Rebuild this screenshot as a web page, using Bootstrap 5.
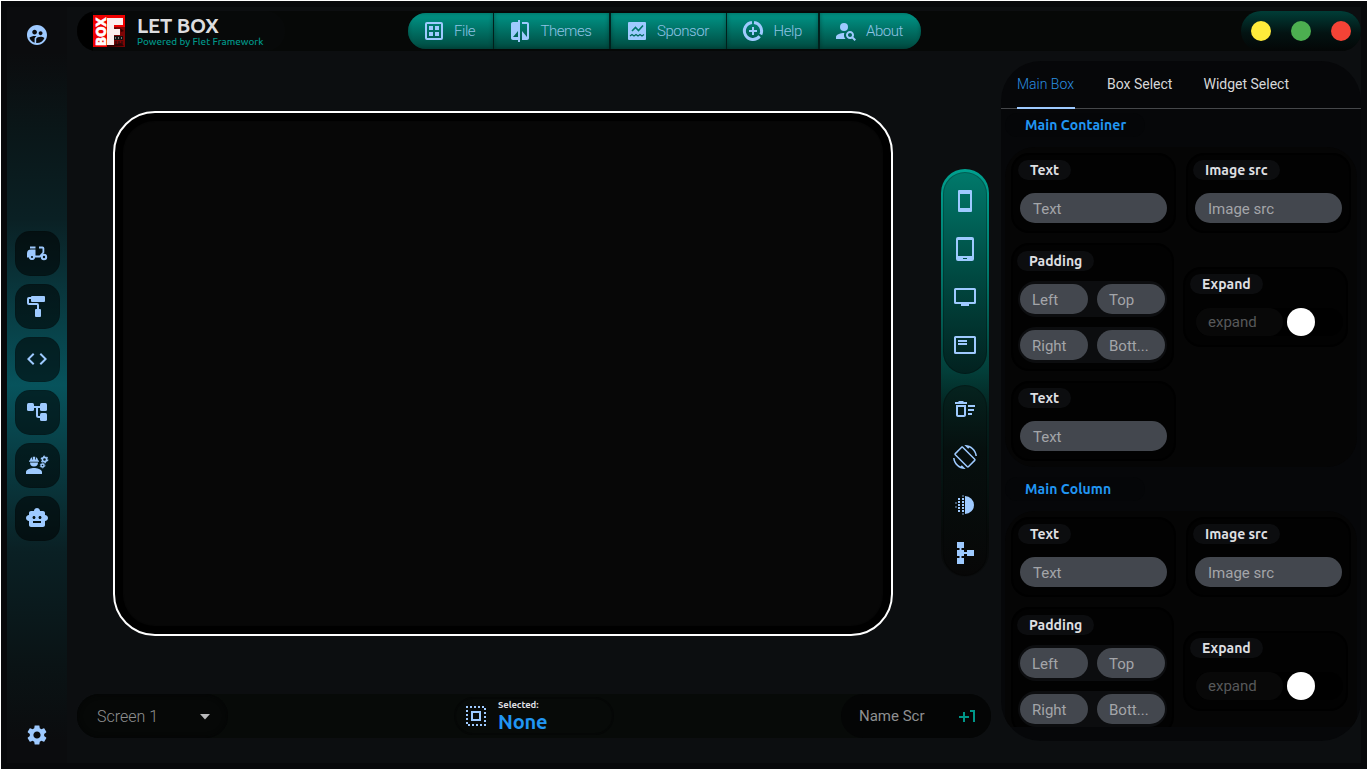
<!DOCTYPE html>
<html lang="en" data-bs-theme="dark">
<head>
<meta charset="utf-8">
<meta name="viewport" content="width=device-width, initial-scale=1">
<title>LET BOX</title>
<link href="https://cdn.jsdelivr.net/npm/bootstrap@5.3.0/dist/css/bootstrap.min.css" rel="stylesheet">
<style>
:root{--ice:#9ecaff;--teal:#009688;--blue:#2196f3}
html,body{height:100%}
body{background:#fff;font-family:Roboto,"Liberation Sans",sans-serif;font-size:14px;overflow:hidden;padding:1px}
svg{display:block;fill:var(--ice);flex:none}
.ln{fill:none;stroke:var(--ice);stroke-width:2}
.shell{background:#08090b;padding:6px;height:768px;width:1366px}
.inner{background:#0c0e10}
.ubuntu{font-family:Ubuntu,"Noto Sans",sans-serif}
.side{width:60px;background:linear-gradient(#0b0c0e 0,#0b0c0e 6%,#0a1618 16%,#0a2024 28%,#07535c 50%,#0a2024 72%,#0a1315 87%,#0b0c0e 97%);padding:16px 0}
.side-btn{width:45px;height:45px;border-radius:15px;background:rgba(0,0,0,.55);border:1px solid rgba(0,0,0,.12)}
.stage{padding:4px 0 0 10px}
.topbar{height:40px;background:#060807;border-radius:20px}
.brand{width:208px;padding-left:16px;gap:12px;background:linear-gradient(90deg,#000 0,#000 16px,#070909 16px);border-radius:20px}
.brand-title{font-size:20.500px;font-weight:600;color:#dddddf;line-height:18px;letter-spacing:-.25px;margin-top:3px}
.brand-sub{font-size:9.900px;color:var(--teal);line-height:14px;font-weight:500;white-space:nowrap}
.menu{height:36px;border-radius:18px;gap:1.5px;overflow:hidden;background:#01211d}
.menu-item{height:36px;background:linear-gradient(#009688,#00493f);box-shadow:inset 0 0 4px rgba(0,30,25,.45);color:#8fc3e6;font-size:15px;font-weight:300;gap:8.500px;padding-left:14px;letter-spacing:-.45px}
.lights{width:120px;background:linear-gradient(#003d37,#031312 55%,#040606);border-radius:20px;gap:20px}
.dot{width:20px;height:20px}
.device{width:780px;height:525px;border:2px solid #fff;border-radius:42px;background:#070707;box-shadow:inset 0 0 1px 8px #000}
.tools{width:48px;height:408px;border-radius:24px;padding-top:3px}
.tools-top{background:linear-gradient(#00a08f,#00796c 25%,#033d38 50%,#04201d 60%,#060908 90%,#0a0c0d)}
.tool-set{width:44px;border-radius:22px;box-shadow:inset 0 0 0 1px rgba(0,0,0,.22)}
.set-a{height:202px;background:linear-gradient(#00796b,#004a42 50%,#02211f)}
.set-b{height:191px;background:linear-gradient(#05231f,#060f0e 35%,#070707)}
.tool-set>span{height:48px;flex:none}
.foot{height:44px;background:#070a08;border-radius:22px}
.pick{width:151px;border-radius:22px;background:#060807;color:#8f9091;font-size:16px;font-weight:300;padding:2px 17px 0 20px;box-shadow:inset 0 0 5px #040505}
.sel{width:160px;height:38px;border:2px solid #050706;border-radius:19px;padding-left:10px;gap:12px}
.name-box{width:150px;border-radius:22px;background:#040505;color:#8f9091;font-size:15px;padding:0 15px 0 18px}
.panel{width:360px;height:680px;border-radius:40px;background:#060709;overflow:hidden}
.panel .nav-tabs{height:48px;border-bottom:1px solid #45474a;flex-wrap:nowrap}
.panel .nav-link{border:0;border-radius:0;padding:0;margin:0 16px;height:48px;line-height:46px;color:#d6d7d9;background:none;font-size:14px;white-space:nowrap}
.panel .nav-link:last-child{margin-left:15px}
.panel .nav-link.active{width:58px;color:#2a8fe0;background:none;border-bottom:2px solid var(--ice);font-weight:300}
.scroller{height:618px;overflow:hidden;padding:4px}
.head{height:24px;width:140px;border-radius:12px;background:#050608;color:var(--blue);font-size:14px;font-weight:600;line-height:24px;padding-left:20px;margin-bottom:10px;letter-spacing:.08px}
.group{height:320px;border-radius:30px;background:#050505;padding:6px;margin-bottom:10px;gap:10px}
.tile{width:165px;height:80px;border-radius:18px;background:#020202;border:2px solid #000;padding:5px 7px 0 5px}
.tag{height:20px;border-radius:10px;background:#0c0d0f;color:#dedfe1;font-size:14px;font-weight:600;line-height:20px;padding:0 12px;width:max-content;margin-bottom:13px;white-space:nowrap}
.field{height:30px;width:147px;border-radius:15px;background:#43474e;color:#a3a5a9;font-size:15px;line-height:32px;padding-left:13px;margin-left:2px}
.tile.tall{width:163px;height:128px;padding:6px 4px}
.tile.low{margin-left:-1px}
.tall .tag{margin-bottom:10px}
.pair{height:36px;width:149px;border-radius:18px;background:#0c0d0f;padding:3px 2px 3px 2px;gap:9px;margin:0 0 10px 1px}
.pair .field{width:68px;margin:0;padding-left:12px}
.tog{height:28px;width:147px;background:#000;border-radius:14px;margin:14px 0 0 6px;gap:4px}
.tog .off{width:87px;height:28px;border-radius:14px;background:#080808;color:#57585a;font-size:15px;line-height:28px;padding-left:12px}
.knob{width:28px;height:28px}
</style>
</head>
<body>
<div class="shell">
<div class="inner d-flex h-100">
  <aside class="side d-flex flex-column align-items-center justify-content-between">
    <svg width="24" height="24" viewBox="0 0 24 24"><path d="M11.99 2c-5.52 0-10 4.48-10 10s4.48 10 10 10 10-4.48 10-10-4.48-10-10-10zm3.61 6.34c1.07 0 1.93.86 1.93 1.93 0 1.07-.86 1.93-1.93 1.93-1.07 0-1.93-.86-1.93-1.93-.01-1.07.86-1.93 1.93-1.93zm-6-1.58c1.3 0 2.36 1.06 2.36 2.36 0 1.3-1.06 2.36-2.36 2.36s-2.36-1.06-2.36-2.36c0-1.31 1.05-2.36 2.36-2.36zm0 9.13v3.75c-2.4-.75-4.3-2.6-5.14-4.96 1.05-1.12 3.67-1.69 5.14-1.69.53 0 1.2.08 1.9.22-1.64.87-1.9 2.02-1.9 2.68zM11.99 20c-.27 0-.53-.01-.79-.04v-4.07c0-1.42 2.94-2.13 4.4-2.13 1.07 0 2.92.39 3.84 1.15-1.17 2.97-4.06 5.09-7.45 5.09z"/></svg>
    <div class="d-flex flex-column gap-2 pt-px" style="padding-top:1px">
      <div class="side-btn d-flex align-items-center justify-content-center"><svg width="24" height="24" viewBox="0 0 24 24"><path d="M5 5.500h5.500v2H5zM6 8.500h4.500v6h4l3-3.300V7.500H14v-2h3.500q1.800 0 1.800 1.800v4.300l-4 4.900h-5.400a3 3 0 0 1-5.800 0H2v-4a4 4 0 0 1 4-4z"/><circle cx="7" cy="16" r="3"/><circle cx="7" cy="16" r="1.100" fill="#041416"/><circle cx="19" cy="16" r="2.200" class="ln"/></svg></div>
      <div class="side-btn d-flex align-items-center justify-content-center"><svg width="24" height="24" viewBox="0 0 24 24"><rect x="6" y="2" width="14" height="6" rx="1"/><rect x="10" y="15" width="6" height="8" rx="1"/><path class="ln" d="M6 4H4a1 1 0 0 0-1 1v4a1 1 0 0 0 1 1h8a1 1 0 0 1 1 1v5"/></svg></div>
      <div class="side-btn d-flex align-items-center justify-content-center"><svg width="24" height="24" viewBox="0 0 24 24"><path d="M9.400 16.600 4.800 12l4.600-4.600L8 6l-6 6 6 6 1.400-1.400zm5.200 0 4.600-4.600-4.600-4.600L16 6l6 6-6 6-1.400-1.400z"/></svg></div>
      <div class="side-btn d-flex align-items-center justify-content-center"><svg width="24" height="24" viewBox="0 0 24 24"><rect x="2" y="3" width="7" height="8" rx="1.500"/><rect x="15" y="3" width="7" height="8" rx="1.500"/><rect x="15" y="13" width="7" height="8" rx="1.500"/><path class="ln" d="M8 7h8M12 7v8.500a1.500 1.500 0 0 0 1.500 1.500H16"/></svg></div>
      <div class="side-btn d-flex align-items-center justify-content-center"><svg width="24" height="24" viewBox="0 0 24 24"><path d="M9 15c-2.670 0-8 1.340-8 4v2h16v-2c0-2.660-5.330-4-8-4zM5 9.500a4 4 0 0 0 8 0zM4 7.500h1C5 6 5.800 4.800 7 4.200V6.500h.8V3.800h2.400V6.500h.8V4.200C12.200 4.800 13 6 13 7.500h1v1.300H4z"/><circle cx="19.500" cy="6.500" r="2.100" class="ln" style="stroke-width:1.600"/><circle cx="19.500" cy="6.500" r="3.300" class="ln" style="stroke-width:1.200;stroke-dasharray:1.730 1.726"/><circle cx="17.500" cy="12.500" r="1.500" class="ln" style="stroke-width:1.400"/><circle cx="17.500" cy="12.500" r="2.400" class="ln" style="stroke-width:.8;stroke-dasharray:1.260 1.253"/></svg></div>
      <div class="side-btn d-flex align-items-center justify-content-center"><svg width="24" height="24" viewBox="0 0 24 24"><path d="M20 9V7c0-1.100-.9-2-2-2h-3c0-1.660-1.340-3-3-3S9 3.340 9 5H6c-1.100 0-2 .9-2 2v2c-1.660 0-3 1.340-3 3s1.340 3 3 3v4c0 1.100.9 2 2 2h12c1.100 0 2-.9 2-2v-4c1.660 0 3-1.340 3-3s-1.340-3-3-3zM7.500 11.500c0-.83.67-1.500 1.500-1.500s1.500.67 1.500 1.500S9.830 13 9 13s-1.500-.67-1.500-1.500zM16 17H8v-2h8v2zm-1-4c-.83 0-1.500-.67-1.500-1.500S14.170 10 15 10s1.500.67 1.500 1.500S15.830 13 15 13z"/></svg></div>
    </div>
    <svg width="24" height="24" viewBox="0 0 24 24"><path d="M19.140 12.940c.04-.3.060-.61.060-.94 0-.32-.02-.64-.07-.94l2.030-1.580c.18-.14.23-.41.120-.61l-1.920-3.320c-.12-.22-.37-.29-.59-.22l-2.390.96c-.5-.38-1.030-.7-1.620-.94l-.36-2.540c-.04-.24-.24-.41-.48-.41h-3.840c-.24 0-.43.17-.47.41l-.36 2.540c-.59.240-1.130.570-1.620.94l-2.390-.96c-.22-.08-.47 0-.59.22L2.740 8.870c-.12.210-.08.470.120.610l2.030 1.580c-.05.300-.09.630-.09.940s.02.640.07.940l-2.030 1.580c-.18.140-.23.410-.12.610l1.920 3.320c.12.220.37.290.59.220l2.390-.96c.5.380 1.030.7 1.620.94l.36 2.540c.05.240.24.410.48.410h3.840c.24 0 .44-.17.47-.41l.36-2.540c.59-.24 1.130-.56 1.620-.94l2.390.96c.22.080.47 0 .59-.22l1.920-3.320c.12-.22.070-.47-.12-.61l-2.010-1.580zM12 15.600c-1.980 0-3.600-1.620-3.600-3.600s1.620-3.600 3.600-3.600 3.600 1.620 3.600 3.600-1.620 3.600-3.600 3.600z"/></svg>
  </aside>

  <div class="stage flex-grow-1 d-flex flex-column">
    <header class="topbar d-flex justify-content-between align-items-center">
      <div class="brand h-100 d-flex align-items-center">
        <svg width="32" height="32" viewBox="0 0 32 32">
          <rect width="32" height="32" fill="#f00000"/>
          <path d="M20 12h12v20H14l6-9z" fill="#7c0505"/><path d="M22 13l3 2-2 3zM27 13l4 3-3 1zM14 29l6 1 8-2 3 3-17 1z" fill="#300"/>
          <text transform="translate(12.500 31) rotate(-90)" font-family="DejaVu Sans" font-weight="bold" font-size="13.500" fill="#fff" stroke="#fff" stroke-width=".6" textLength="28.500" lengthAdjust="spacingAndGlyphs">BOX</text>
          <path d="M14 3h16v7h-9v4h6v6h-6v10h-7z" fill="#fbeeee"/>
          <rect x="21" y="21" width="9" height="4" fill="#111"/><path d="M23 26v4M26 26v4M29 26v4" stroke="#111"/><path d="M22 23h1M25 23h1M28 23h1" stroke="#ddd"/>
        </svg>
        <div class="ubuntu">
          <div class="brand-title">LET BOX</div>
          <div class="brand-sub">Powered by Flet Framework</div>
        </div>
      </div>
      <nav class="menu d-flex" style="margin-left:11px">
        <div class="menu-item d-flex align-items-center" style="width:85px"><svg width="24" height="24" viewBox="0 0 24 24"><rect x="4" y="4" width="16" height="16" rx="1" class="ln"/><path d="M7 7h4v4H7zM13 7h4v4h-4zM7 13h4v4H7zM13 13h4v4h-4z"/></svg>File</div>
        <div class="menu-item d-flex align-items-center" style="width:115px"><svg width="24" height="24" viewBox="0 0 24 24"><path d="M10 3H5c-1.100 0-2 .9-2 2v14c0 1.100.9 2 2 2h5v2h2V1h-2v2zm0 15H5l5-6v6zm9-15h-5v2h5v13l-5-6v9h5c1.100 0 2-.9 2-2V5c0-1.100-.9-2-2-2z"/></svg>Themes</div>
        <div class="menu-item d-flex align-items-center" style="width:115px"><svg width="24" height="24" viewBox="0 0 24 24"><rect x="3" y="3" width="18" height="18" rx="1"/><path d="M7 12l3.500-3.500 3 3L18 6.500" fill="none" stroke="#00796c" stroke-width="1.600"/><path d="M5 17l2-1.500 2 1.500 2-1.500 2 1.500 2-1.500 2 1.500 2-1.500" fill="none" stroke="#00695f" stroke-width="1.200"/></svg>Sponsor</div>
        <div class="menu-item d-flex align-items-center" style="width:91px"><svg width="24" height="24" viewBox="0 0 24 24"><path class="ln" style="stroke-width:3" d="M13 3.500a8.500 8.500 0 0 1 6.800 12M18.600 17.200A8.500 8.500 0 1 1 11 3.500"/><path class="ln" d="M12 8v8M8 12h8"/></svg>Help</div>
        <div class="menu-item d-flex align-items-center" style="width:101px"><svg width="24" height="24" viewBox="0 0 24 24"><circle cx="10" cy="8" r="4"/><path d="M10.350 14.010C7.620 13.910 2 15.270 2 18v2h9.540c-2.470-2.760-1.230-5.890-1.190-5.990zM19.430 18.020c.36-.59.570-1.280.570-2.020 0-2.210-1.790-4-4-4s-4 1.790-4 4 1.790 4 4 4c.74 0 1.430-.22 2.020-.57L20.590 22 22 20.590l-2.570-2.570zM16 18c-1.100 0-2-.9-2-2s.9-2 2-2 2 .9 2 2-.9 2-2 2z"/></svg>About</div>
      </nav>
      <div class="d-flex justify-content-end h-100" style="width:329px"><div class="lights d-flex align-items-center justify-content-center">
        <span class="dot rounded-circle" style="background:#ffeb3b"></span><span class="dot rounded-circle" style="background:#4caf50"></span><span class="dot rounded-circle" style="background:#f44336"></span>
      </div></div>
    </header>

    <div class="d-flex justify-content-between" style="padding-top:10px">
      <main style="width:914px">
        <div class="d-flex" style="height:633px;padding:50px 0 0 36px">
          <div class="device"></div>
          <div style="margin:58px 0 0 48px">
            <div class="tools tools-top d-flex flex-column align-items-center">
              <div class="tool-set set-a d-flex flex-column align-items-center" style="padding-top:5px">
                <span class="d-flex align-items-center"><svg width="24" height="24" viewBox="0 0 24 24"><path fill-rule="evenodd" d="M6 1h12a1 1 0 0 1 1 1v20a1 1 0 0 1-1 1H6a1 1 0 0 1-1-1V2a1 1 0 0 1 1-1zm1 4v14h10V5z"/></svg></span>
                <span class="d-flex align-items-center"><svg width="24" height="24" viewBox="0 0 24 24"><path fill-rule="evenodd" d="M5 0h14a2 2 0 0 1 2 2v20a2 2 0 0 1-2 2H5a2 2 0 0 1-2-2V2a2 2 0 0 1 2-2zm0 3v16h14V3zm5 18v1h4v-1z"/></svg></span>
                <span class="d-flex align-items-center"><svg width="24" height="24" viewBox="0 0 24 24"><rect x="2" y="4" width="20" height="14" rx=".5" class="ln"/><path d="M8 18h8v3H8z"/></svg></span>
                <span class="d-flex align-items-center"><svg width="24" height="24" viewBox="0 0 24 24"><rect x="2" y="4" width="20" height="16" rx=".5" class="ln"/><path d="M5 7h9v2H5zM5 10h9v2H5z"/></svg></span>
              </div>
              <div class="tool-set set-b d-flex flex-column align-items-center" style="margin-top:11px">
                <span class="d-flex align-items-center"><svg width="24" height="24" viewBox="0 0 24 24"><path d="M15 16h4v2h-4zm0-8h7v2h-7zm0 4h6v2h-6zM3 18c0 1.100.9 2 2 2h6c1.100 0 2-.9 2-2V8H3v10zm2-8h6v8H5v-8zm5-6H6L5 5H2v2h12V5h-3z"/></svg></span>
                <span class="d-flex align-items-center"><svg width="24" height="24" viewBox="0 0 24 24"><path d="M16.480 2.520c3.270 1.550 5.610 4.720 5.970 8.480h1.500C23.440 4.840 18.290 0 12 0l-.66.030 3.810 3.810 1.330-1.320zm-6.250-.77c-.59-.59-1.540-.59-2.120 0L1.750 8.110c-.59.590-.59 1.540 0 2.120l12.020 12.020c.59.590 1.540.590 2.120 0l6.360-6.360c.59-.59.590-1.540 0-2.120L10.230 1.750zm4.600 19.440L2.810 9.170l6.360-6.360 12.020 12.020-6.360 6.360zm-7.310.29C4.250 19.940 1.910 16.760 1.550 13H.05C.56 19.160 5.710 24 12 24l.66-.03-3.810-3.810-1.330 1.320z"/></svg></span>
                <span class="d-flex align-items-center"><svg width="24" height="24" viewBox="0 0 24 24"><path d="M12 3a9 9 0 0 1 0 18zM9 8h2v2H9zM9 14h2v2H9zM9 5h2v2H9zM9 17h2v2H9zM9 11h2v2H9zM5 8h2v2H5zM5 11h2v2H5zM5 14h2v2H5zM5 5h2v2H5zM5 17h2v2H5z"/><path opacity=".4" d="M2 9h2v2H2zM2 13h2v2H2zM9 2h2v2H9zM9 20h2v2H9z"/></svg></span>
                <span class="d-flex align-items-center"><svg width="24" height="24" viewBox="0 0 24 24"><path d="M4 1h7v6H4zM4 9h7v6H4zM4 17h7v6H4zM14 9h7v6h-7z"/><path class="ln" d="M7.500 6v12M10 12h5"/></svg></span>
              </div>
            </div>
          </div>
        </div>
        <footer class="foot d-flex justify-content-between align-items-center">
          <div class="pick h-100 d-flex align-items-center justify-content-between">Screen 1<svg width="12" height="6" viewBox="0 0 12 6" style="fill:#b9babb"><path d="M1 0h10L6 5.500z"/></svg></div>
          <div class="sel d-flex align-items-center" style="margin-left:225px"><svg width="20" height="20" viewBox="0 0 20 20"><path class="ln" d="M1 1h18v18H1z" stroke-dasharray="2 2" stroke-dashoffset="1"/><path class="ln" d="M6 6h8v8H6z"/></svg>
            <div class="ubuntu" style="padding-top:1px"><div style="font-size:9.500px;line-height:10px;font-weight:700;color:#dedfe1;letter-spacing:-.1px">Selected:</div><div style="font-size:20px;line-height:24px;font-weight:600;color:#2196f3;letter-spacing:-.2px">None</div></div>
          </div>
          <div class="d-flex justify-content-end h-100" style="width:376px"><div class="name-box h-100 d-flex align-items-center justify-content-between">Name Scr<svg width="18" height="16" viewBox="0 0 18 16"><path d="M1 9h10M6 4v10M12 3h4v11" fill="none" stroke="#009688" stroke-width="2"/></svg></div></div>
        </footer>
      </main>

      <section class="panel">
        <div class="nav nav-tabs">
          <a class="nav-link active">Main Box</a><a class="nav-link">Box Select</a><a class="nav-link">Widget Select</a>
        </div>
        <div class="scroller">
          <div class="head ubuntu">Main Container</div>
          <div class="group d-flex flex-wrap align-content-start align-items-center">
            <div class="tile"><div class="tag ubuntu">Text</div><div class="field">Text</div></div>
            <div class="tile"><div class="tag ubuntu">Image src</div><div class="field">Image src</div></div>
            <div class="tile tall"><div class="tag ubuntu">Padding</div><div class="pair d-flex"><div class="field">Left</div><div class="field">Top</div></div><div class="pair d-flex"><div class="field">Right</div><div class="field">Bott...</div></div></div>
            <div class="tile low"><div class="tag ubuntu">Expand</div><div class="tog d-flex"><div class="off">expand</div><div class="knob rounded-circle bg-white"></div></div></div>
            <div class="tile"><div class="tag ubuntu">Text</div><div class="field">Text</div></div>
          </div>
          <div class="head ubuntu">Main Column</div>
          <div class="group d-flex flex-wrap align-content-start align-items-center">
            <div class="tile"><div class="tag ubuntu">Text</div><div class="field">Text</div></div>
            <div class="tile"><div class="tag ubuntu">Image src</div><div class="field">Image src</div></div>
            <div class="tile tall"><div class="tag ubuntu">Padding</div><div class="pair d-flex"><div class="field">Left</div><div class="field">Top</div></div><div class="pair d-flex"><div class="field">Right</div><div class="field">Bott...</div></div></div>
            <div class="tile low"><div class="tag ubuntu">Expand</div><div class="tog d-flex"><div class="off">expand</div><div class="knob rounded-circle bg-white"></div></div></div>
          </div>
        </div>
      </section>
    </div>
  </div>
</div>
</div>
<script src="https://cdn.jsdelivr.net/npm/bootstrap@5.3.0/dist/js/bootstrap.bundle.min.js"></script>
</body>
</html>
